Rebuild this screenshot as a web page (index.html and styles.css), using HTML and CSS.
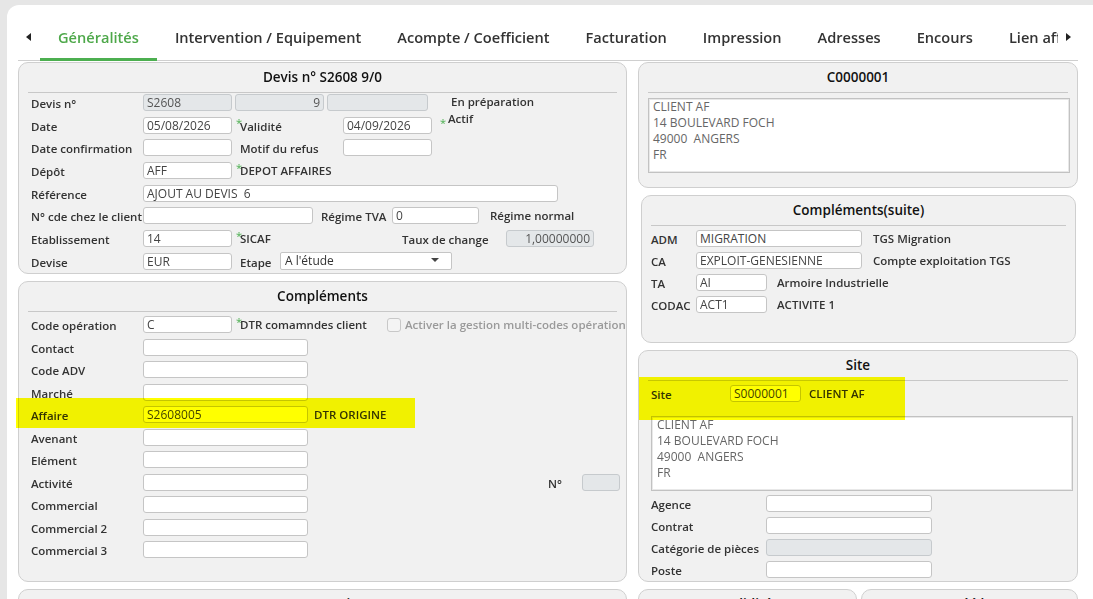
FILE: index.html
```html
<!DOCTYPE html>
<html lang="fr">
<head>
  <meta charset="UTF-8" />
  <title>Devis S2608 - Généralités</title>
  <link rel="stylesheet" href="styles.css">
</head>
<body>
  <div class="page">
    <div class="tabs">
      <span class="arrow arrow-left"></span>
      <div class="tab-scroll">
        <div class="tab active">Généralités</div>
        <div class="tab">Intervention / Equipement</div>
        <div class="tab">Acompte / Coefficient</div>
        <div class="tab">Facturation</div>
        <div class="tab">Impression</div>
        <div class="tab">Adresses</div>
        <div class="tab">Encours</div>
        <div class="tab">Lien affaire</div>
      </div>
      <span class="arrow arrow-right"></span>
    </div>

    <div class="content">
      <!-- colonne gauche -->
      <div class="col col-left">
        <div class="panel panel-devis">
          <div class="panel-title">Devis n° S2608 9/0</div>
          <div class="fields">
            <div class="row">
              <span class="lbl">Devis n°</span>
              <input class="in in-s off" value="S2608" readonly>
              <input class="in in-s off num gap3" value="9" readonly>
              <input class="in in-101 off gap3" value="" readonly>
              <span class="txt status">En préparation</span>
            </div>
            <div class="row">
              <span class="lbl">Date</span>
              <input class="in in-s" value="05/08/2026">
              <span class="req">*</span>
              <span class="lbl lbl-mid">Validité</span>
              <input class="in in-s" value="04/09/2026">
              <span class="req req-far">*</span>
              <span class="txt status-up">Actif</span>
            </div>
            <div class="row">
              <span class="lbl">Date confirmation</span>
              <input class="in in-s" value="">
              <span class="lbl lbl-mid sp8">Motif du refus</span>
              <input class="in in-s" value="">
            </div>
            <div class="row">
              <span class="lbl">Dépôt</span>
              <input class="in in-s" value="AFF">
              <span class="req">*</span>
              <span class="txt">DEPOT AFFAIRES</span>
            </div>
            <div class="row">
              <span class="lbl">Référence</span>
              <input class="in in-415" value="AJOUT AU DEVIS  6">
            </div>
            <div class="row">
              <span class="lbl">N° cde chez le client</span>
              <input class="in in-170" value="">
              <span class="lbl lbl-tva sp8">Régime TVA</span>
              <input class="in in-87" value="0">
              <span class="txt sp11">Régime normal</span>
            </div>
            <div class="row">
              <span class="lbl">Etablissement</span>
              <input class="in in-s" value="14">
              <span class="req">*</span>
              <span class="txt txt-sicaf">SICAF</span>
              <span class="lbl lbl-taux">Taux de change</span>
              <input class="in in-88 off num" value="1,00000000" readonly>
            </div>
            <div class="row">
              <span class="lbl">Devise</span>
              <input class="in in-s" value="EUR">
              <span class="lbl lbl-etape sp8">Etape</span>
              <div class="select">A l'étude<span class="caret"></span></div>
            </div>
          </div>
        </div>

        <div class="panel panel-compl">
          <div class="panel-title">Compléments</div>
          <div class="fields">
            <div class="row">
              <span class="lbl">Code opération</span>
              <input class="in in-s" value="C">
              <span class="req">*</span>
              <span class="txt txt-dtr">DTR comamndes client</span>
              <span class="check"></span>
              <span class="txt muted">Activer la gestion multi-codes opération</span>
            </div>
            <div class="row"><span class="lbl">Contact</span><input class="in in-165" value=""></div>
            <div class="row"><span class="lbl">Code ADV</span><input class="in in-165" value=""></div>
            <div class="row"><span class="lbl">Marché</span><input class="in in-165" value=""></div>
            <div class="row">
              <span class="lbl">Affaire</span>
              <input class="in in-165" value="S2608005">
              <span class="txt sp6">DTR ORIGINE</span>
            </div>
            <div class="row"><span class="lbl">Avenant</span><input class="in in-165" value=""></div>
            <div class="row"><span class="lbl">Elément</span><input class="in in-165" value=""></div>
            <div class="row">
              <span class="lbl">Activité</span>
              <input class="in in-165" value="">
              <span class="lbl lbl-no">N°</span>
              <input class="in in-38 off" value="" readonly>
            </div>
            <div class="row"><span class="lbl">Commercial</span><input class="in in-165" value=""></div>
            <div class="row"><span class="lbl">Commercial 2</span><input class="in in-165" value=""></div>
            <div class="row"><span class="lbl">Commercial 3</span><input class="in in-165" value=""></div>
          </div>
          <div class="mark mark-affaire"></div>
        </div>

        <div class="panel panel-stub">
          <div class="panel-title">Commentaires</div>
        </div>
      </div>

      <!-- colonne droite -->
      <div class="col col-right">
        <div class="panel panel-client">
          <div class="panel-title">C0000001</div>
          <div class="addr addr-client">
            <div>CLIENT AF</div>
            <div>14 BOULEVARD FOCH</div>
            <div>49000&nbsp;&nbsp;ANGERS</div>
            <div>FR</div>
          </div>
        </div>

        <div class="panel panel-suite">
          <div class="panel-title">Compléments(suite)</div>
          <div class="fields">
            <div class="row">
              <span class="lbl lbl-code">ADM</span>
              <input class="in in-166" value="MIGRATION">
              <span class="txt sp11">TGS Migration</span>
            </div>
            <div class="row">
              <span class="lbl lbl-code">CA</span>
              <input class="in in-166" value="EXPLOIT-GENESIENNE">
              <span class="txt sp11">Compte exploitation TGS</span>
            </div>
            <div class="row">
              <span class="lbl lbl-code">TA</span>
              <input class="in in-71" value="AI">
              <span class="txt sp10">Armoire Industrielle</span>
            </div>
            <div class="row">
              <span class="lbl lbl-code">CODAC</span>
              <input class="in in-71" value="ACT1">
              <span class="txt sp10">ACTIVITE 1</span>
            </div>
          </div>
        </div>

        <div class="panel panel-site">
          <div class="panel-title">Site</div>
          <div class="fields">
            <div class="row">
              <span class="lbl lbl-site">Site</span>
              <input class="in in-71" value="S0000001">
              <span class="txt sp8">CLIENT AF</span>
            </div>
          </div>
          <div class="addr addr-site">
            <div>CLIENT AF</div>
            <div>14 BOULEVARD FOCH</div>
            <div>49000&nbsp;&nbsp;ANGERS</div>
            <div>FR</div>
          </div>
          <div class="fields fields-site">
            <div class="row"><span class="lbl lbl-wide">Agence</span><input class="in in-166" value=""></div>
            <div class="row"><span class="lbl lbl-wide">Contrat</span><input class="in in-166" value=""></div>
            <div class="row"><span class="lbl lbl-wide">Catégorie de pièces</span><input class="in in-166 off" value="" readonly></div>
            <div class="row"><span class="lbl lbl-wide">Poste</span><input class="in in-166" value=""></div>
          </div>
          <div class="mark mark-site"></div>
        </div>

        <div class="stub-row">
          <div class="panel panel-stub-d"><div class="panel-title">Validité</div></div>
          <div class="panel panel-stub-e"><div class="panel-title">Créé le</div></div>
        </div>
      </div>
    </div>
  </div>
</body>
</html>
```

FILE: styles.css
```css
body {
  margin: 0;
  height: 599px;
  overflow: hidden;
  background: #e6e6e6;
  font-family: "Open Sans", "Noto Sans", sans-serif;
  color: #333;
}
.page {
  margin: 5px 0 0 7px;
  height: 720px;
  background: #fff;
  border-top-left-radius: 12px;
}

/* onglets */
.tabs {
  display: flex;
  align-items: flex-start;
  height: 56px;
  padding-left: 19px;
  background: linear-gradient(#cfcfcf, #cfcfcf) no-repeat 11px 55px / 1060px 1px;
}
.arrow {
  width: 0;
  height: 0;
  margin-top: 28px;
  border-top: 4px solid transparent;
  border-bottom: 4px solid transparent;
}
.arrow-left {
  border-right: 5px solid #222;
  margin-right: 9px;
}
.arrow-right {
  border-left: 5px solid #222;
  margin-left: 8px;
}
.tab-scroll {
  display: flex;
  flex-shrink: 0;
  width: 1018px;
  overflow: hidden;
}
.tab {
  box-sizing: border-box;
  height: 56px;
  padding: 22px 18px 0;
  border-bottom: 3px solid transparent;
  font-size: 14.6px;
  line-height: 20px;
  font-weight: 600;
  color: #333;
  white-space: nowrap;
}
.tab.active {
  color: #4ea84a;
  border-bottom-color: #4caf50;
}

/* colonnes */
.content {
  display: flex;
  gap: 11px;
  padding: 1px 15px 0 11px;
}
.col {
  display: flex;
  flex-direction: column;
  gap: 7px;
  flex-shrink: 0;
}
.col-left { width: 609px; }
.col-right { width: 440px; }

.panel {
  position: relative;
  box-sizing: border-box;
  flex-shrink: 0;
  background: #f1f1f1;
  border: 1px solid #cfcfcf;
  border-radius: 10px;
}
.panel-title {
  margin: 0 9px;
  height: 29px;
  line-height: 29px;
  border-bottom: 1px solid #c8c8c8;
  text-align: center;
  font-size: 13.5px;
  font-weight: 600;
  color: #111;
  white-space: nowrap;
}
.panel-devis { height: 212px; }
.panel-compl { height: 301px; }
.panel-stub { height: 120px; }
.panel-client { height: 126px; }
.panel-suite { height: 148px; margin: 0 2px 0 3px; }
.panel-site { height: 232px; }
.stub-row {
  display: flex;
  gap: 4px;
}
.panel-stub-d { width: 219px; height: 120px; }
.panel-stub-e { width: 217px; height: 120px; }

/* lignes de champs */
.fields {
  display: flex;
  flex-direction: column;
  gap: 5.7px;
  padding: 1px 0 0 12px;
}
.panel-compl .fields { padding-top: 4px; gap: 5.5px; }
.panel-suite .fields { padding: 3.5px 0 0 9px; gap: 5.3px; }
.panel-site .fields { padding-top: 3.5px; }
.panel-site .fields-site { padding-top: 4px; gap: 5px; }

.row {
  display: flex;
  align-items: center;
  height: 17px;
}
.lbl {
  flex: 0 0 112px;
  min-width: 0;
  font-size: 11.5px;
  line-height: 17px;
  font-weight: 600;
  color: #333;
  white-space: nowrap;
  padding-top: 2px;
}
.lbl-mid { flex-basis: 103px; }
.lbl-tva { flex-basis: 71px; }
.lbl-taux { flex-basis: 104px; }
.lbl-etape { flex-basis: 40px; }
.lbl-no { flex-basis: 34px; margin-left: 240px; }
.lbl-code { flex-basis: 45px; }
.lbl-site { flex-basis: 79px; }
.lbl-wide { flex-basis: 115px; }

.txt {
  font-size: 11.5px;
  line-height: 17px;
  font-weight: 600;
  color: #333;
  white-space: nowrap;
}
.txt-sicaf { flex: 0 0 162px; }
.txt-dtr { flex: 0 0 147px; }
.muted { color: #9a9a9a; }
.status { margin-left: 23px; padding-bottom: 2px; }
.status-up {
  align-self: flex-start;
  margin: -7px 0 0 4px;
}

.req {
  align-self: flex-start;
  width: 4px;
  margin-left: 4px;
  font-size: 11px;
  line-height: 11px;
  color: #4caf50;
}
.req-far { margin-left: 8px; }

/* saisies */
.in {
  box-sizing: border-box;
  flex-shrink: 0;
  height: 17px;
  margin: 0;
  padding: 0 3px;
  border: 1px solid #c5c5c5;
  border-radius: 3px;
  background: #fff;
  font-family: "Open Sans", "Noto Sans", sans-serif;
  font-size: 12px;
  color: #444;
  outline: none;
}
.in.off {
  background: #e4e7e9;
  border-color: #c6cacd;
  color: #555;
}
.in.num { text-align: right; }
.in-s { width: 89px; }
.in-101 { width: 101px; }
.in-415 { width: 415px; }
.in-170 { width: 170px; }
.in-87 { width: 87px; }
.in-88 { width: 88px; }
.in-165 { width: 165px; }
.in-166 { width: 166px; }
.in-71 { width: 71px; }
.in-38 { width: 38px; }

/* marges (après .in pour passer devant) */
.gap3 { margin-left: 3px; }
.sp6 { margin-left: 6px; }
.sp8 { margin-left: 8px; }
.sp10 { margin-left: 10px; }
.sp11 { margin-left: 11px; }

.select {
  box-sizing: border-box;
  display: flex;
  align-items: center;
  width: 172px;
  height: 18px;
  padding: 0 0 2px 4px;
  border: 1px solid #c5c5c5;
  border-radius: 2px;
  background: #fff;
  font-size: 12px;
  color: #333;
}
.caret {
  margin-left: auto;
  margin-right: 12px;
  border-left: 4px solid transparent;
  border-right: 4px solid transparent;
  border-top: 4px solid #444;
}
.check {
  box-sizing: border-box;
  flex-shrink: 0;
  width: 14px;
  height: 14px;
  margin-right: 4px;
  border: 1px solid #c8c8c8;
  border-radius: 3px;
  background: #f4f4f4;
}

/* adresses */
.addr {
  box-sizing: border-box;
  border: 1px solid #c2c2c2;
  box-shadow: inset 0 0 0 1px #e8e8e8;
  background: #fff;
  font-size: 12px;
  line-height: 16px;
  color: #666;
}
.addr-client {
  height: 75px;
  margin: 5px 7px 0 9px;
  padding-left: 4px;
}
.addr-site {
  height: 75px;
  margin: 14px 4px 0 12px;
  padding-left: 5px;
}

/* surlignage jaune */
.mark {
  position: absolute;
  background: #ffff00;
  mix-blend-mode: multiply;
  pointer-events: none;
}
.mark-affaire {
  left: -3px;
  top: 116px;
  width: 399px;
  height: 30px;
}
.mark-site {
  left: 0;
  top: 26px;
  width: 266px;
  height: 43px;
}
```
